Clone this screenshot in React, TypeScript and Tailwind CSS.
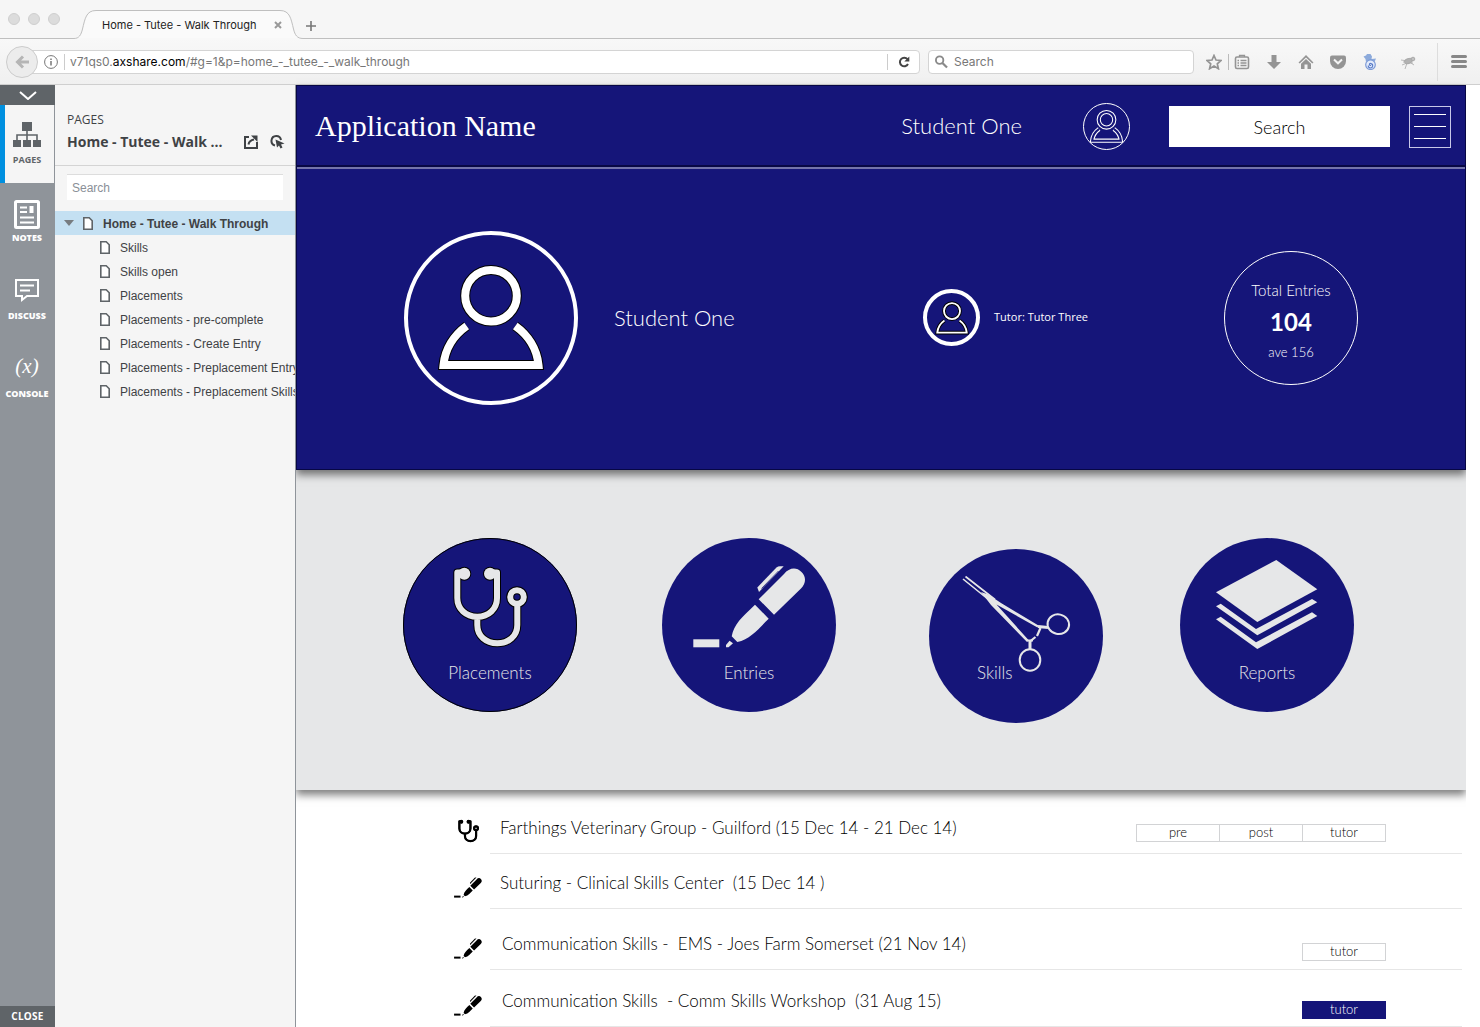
import { ReactNode } from "react";

const NAVY = "#151579";
const PALE = "#e6e7e8";

const PAGES = [
  "Skills",
  "Skills open",
  "Placements",
  "Placements - pre-complete",
  "Placements - Create Entry",
  "Placements - Preplacement Entry",
  "Placements - Preplacement Skills",
];

/* ---------- icons ---------- */

interface PersonProps {
  className: string;
  outer: number;
  inner: number;
  outerColor?: string;
  innerColor?: string;
}

function Person({ className, outer, inner, outerColor = "#000", innerColor = "#fff" }: PersonProps) {
  const body = "M62.7 95C50 104 41 118 39.5 134H134.5C133 118 124 104 111.3 95";
  return (
    <svg viewBox="29 29 116 116" fill="none" className={className} aria-hidden="true">
      <g stroke={outerColor} strokeWidth={outer}>
        <path d={body} />
        <circle cx="87" cy="64.7" r="25.8" />
      </g>
      <g stroke={innerColor} strokeWidth={inner}>
        <path d={body} />
        <circle cx="87" cy="64.7" r="25.8" />
      </g>
    </svg>
  );
}

function StethoscopeShape({ color, outline }: { color: string; outline?: string }) {
  const tubes = "M61 34.5H54.3V60C54.3 71 63 78.7 74.3 78.7S94 71 94 60V34.5H87M74.3 78.7V87C74.3 98 83 105.3 94.3 105.3S114.3 98 114.3 87V68";
  return (
    <>
      {outline && (
        <g stroke={outline} fill={outline}>
          <path d={tubes} fill="none" strokeWidth="8" strokeLinejoin="round" />
          <circle cx="61.3" cy="35.7" r="7" stroke="none" />
          <circle cx="87" cy="35.7" r="7" stroke="none" />
          <circle cx="114" cy="59" r="6.8" fill="none" strokeWidth="8" />
        </g>
      )}
      <g stroke={color} fill={color}>
        <path d={tubes} fill="none" strokeWidth="6" strokeLinejoin="round" />
        <circle cx="61.3" cy="35.7" r="6" stroke="none" />
        <circle cx="87" cy="35.7" r="6" stroke="none" />
        <circle cx="114" cy="59" r="6.8" fill="none" strokeWidth="6" />
      </g>
    </>
  );
}

function PenShape({ color }: { color: string }) {
  return (
    <g fill={color}>
      <path d="M31.3 101.3H57.3V109.3H31.3Z" />
      <path d="M64 107L67.5 102.7L71 105.2L66.5 109.3H64Z" />
      <path d="M93 66.7L106.7 80.7C97 90 89 101 75.3 104L69.7 98.3C72 86 80 79 93 66.7Z" />
      <path d="M96.7 61.3L122 36C127 30 134 28.5 139.5 34C144.5 39 144 45.5 139 50.5L112 76.7Z" />
      <path d="M114.5 29.5Q116 28.2 118 28.2H121.7L97 54L95.3 49.5Z" />
      <path d="M99.5 50.5L116.5 33" stroke={color === PALE ? NAVY : "#fff"} strokeWidth=".8" />
    </g>
  );
}

function ForcepsShape() {
  return (
    <g stroke={PALE} fill="none">
      <path d="M52 43L58 45L66 50L72 54L109.5 76.5L108.5 78.5L67.5 55.500L99.5 91L98 93L62 56Z" fill={PALE} stroke="none" />
      <path d="M34 30L60 51M36.5 27.5L66 50.5" strokeWidth="1.6" />
      <path d="M109 77.5L119 78.5" strokeWidth="3" />
      <path d="M111.5 79L108 87M106.5 88L101.5 92" strokeWidth="2.2" />
      <path d="M98 91.5H104" strokeWidth="2" />
      <path d="M101 91V100" strokeWidth="3" />
      <ellipse cx="129.3" cy="75.2" rx="10.8" ry="9.8" strokeWidth="2" transform="rotate(12 129.3 75.2)" />
      <ellipse cx="101" cy="111" rx="10.3" ry="10.8" strokeWidth="2" />
    </g>
  );
}

function PapersShape() {
  return (
    <g fill={PALE}>
      <path d="M96.3 22L137.3 51.3L77.3 84L36 54.3Z" />
      <path d="M36 68.3L40.7 65.7L76 91L132 61L137.3 64.3L77.3 97.3Z" />
      <path d="M36 81.3L40.7 78.7L76 104.3L132 74.3L137.3 78L77.3 111Z" />
    </g>
  );
}

function PageIcon() {
  return (
    <svg viewBox="0 0 10 13" className="h-[13px] w-[10px] shrink-0" aria-hidden="true">
      <path d="M.8 .8H6.2L9.2 3.8V12.2H.8Z" fill="#fff" stroke="#5f6468" strokeWidth="1.6" />
    </svg>
  );
}

/* ---------- browser chrome ---------- */

function TabStrip() {
  return (
    <div className="flex h-[39px] bg-[#f6f6f6]">
      <div className="flex w-[74px] items-center gap-2 border-b border-[#bfbfbf] pl-2">
        <span className="size-3 rounded-full border border-[#cfcfcf] bg-[#dcdcdc]" />
        <span className="size-3 rounded-full border border-[#cfcfcf] bg-[#dcdcdc]" />
        <span className="size-3 rounded-full border border-[#cfcfcf] bg-[#dcdcdc]" />
      </div>
      <div className="grid w-[229px]">
        <svg viewBox="0 0 229 39" className="col-start-1 row-start-1 h-[39px] w-full" aria-hidden="true">
          <path d="M0 38.5C5 38.5 7 35 8.5 29C11 19 12 10.5 22 10.5H206C216 10.5 217 19 219.5 29C221 35 223 38.5 229 38.5" fill="#fafafa" stroke="#bfbfbf" />
        </svg>
        <div className="col-start-1 row-start-1 flex items-center justify-between pt-[11px] pr-[21px] pl-7">
          <span className="text-[11px] text-[#222]">Home - Tutee - Walk Through</span>
          <button aria-label="Close tab">
            <svg viewBox="0 0 8 8" className="size-2" stroke="#999" strokeWidth="2">
              <path d="M1 1L7 7M7 1L1 7" />
            </svg>
          </button>
        </div>
      </div>
      <div className="flex flex-1 items-center border-b border-[#bfbfbf] pt-[13px] pl-[3px]">
        <button aria-label="New tab">
          <svg viewBox="0 0 10 10" className="size-[10px]" stroke="#777" strokeWidth="1.6">
            <path d="M5 0V10M0 5H10" />
          </svg>
        </button>
      </div>
    </div>
  );
}

function ToolButton({ label, children }: { label: string; children: ReactNode }) {
  return (
    <button aria-label={label} className="flex w-8 justify-center">
      <svg viewBox="0 0 16 16" className="size-4" fill="#949494">
        {children}
      </svg>
    </button>
  );
}

function Toolbar() {
  return (
    <div className="flex h-[46px] items-center border-b border-[#cfcfcf] bg-linear-to-b from-[#f8f8f8] to-[#f0f0f0] pl-[6px]">
      <button aria-label="Back" className="z-10 flex size-8 shrink-0 items-center justify-center rounded-full border border-[#ccc] bg-[#ececec]">
        <svg viewBox="0 0 14 14" className="size-[14px]" fill="none" stroke="#b5b5b5" strokeWidth="3">
          <path d="M14 7H3M8 1.5L2.5 7L8 12.5" />
        </svg>
      </button>
      <div className="-ml-2 flex h-6 flex-1 items-center rounded-r border border-[#d4d4d4] bg-white pl-[13px]">
        <svg viewBox="0 0 14 14" className="size-[14px] shrink-0" fill="none" stroke="#777" aria-hidden="true">
          <circle cx="7" cy="7" r="6.4" />
          <path d="M7 6V10.5M7 3.5V5" strokeWidth="1.5" />
        </svg>
        <a href="#home" className="ml-[6px] border-l border-[#ccc] pl-[5px] text-[12px] leading-4 text-[#777]">
          v71qs0.<span className="text-black">axshare.com</span>/#g=1&amp;p=home_-_tutee_-_walk_through
        </a>
        <button aria-label="Reload" className="ml-auto flex h-4 w-8 items-center justify-center border-l border-[#ccc]">
          <svg viewBox="0 0 12 12" className="size-3" fill="none" stroke="#444" strokeWidth="2">
            <path d="M9.5 3.2A4.3 4.3 0 1 0 10 8" />
            <path d="M11.3 .5V5.5H6.3Z" fill="#444" stroke="none" />
          </svg>
        </button>
      </div>
      <label className="ml-2 flex h-6 w-[266px] items-center gap-[6px] rounded border border-[#d4d4d4] bg-white pl-[6px]">
        <svg viewBox="0 0 14 14" className="size-[14px]" fill="none" stroke="#8a8a8a" strokeWidth="2">
          <circle cx="5" cy="5" r="4" />
          <path d="M8 8L13 13" strokeWidth="2.4" />
        </svg>
        <input aria-label="Web search" placeholder="Search" className="w-full text-[12px] outline-none placeholder:text-[#777]" />
      </label>
      <div className="ml-3 flex items-center">
        <button aria-label="Bookmark" className="flex w-[23px] justify-start border-r border-[#bbb]">
          <svg viewBox="0 0 16 16" className="size-4" fill="none" stroke="#949494" strokeWidth="1.7">
            <path d="M8 1.5L10 6L15 6.5L11.3 9.8L12.4 14.7L8 12L3.6 14.7L4.7 9.8L1 6.5L6 6Z" />
          </svg>
        </button>
        <button aria-label="Library" className="mr-2 ml-[5px]">
          <svg viewBox="0 0 16 16" className="size-4" fill="none" stroke="#949494" strokeWidth="1.6">
            <rect x="1.5" y="3" width="13" height="11.5" rx="1.5" />
            <path d="M5.5 3V1.5H10.5V3M3.5 6.5H5M6.5 6.5H12.5M3.5 9H5M6.5 9H12.5M3.5 11.5H5M6.5 11.5H12.5" strokeWidth="1.3" />
          </svg>
        </button>
        <ToolButton label="Downloads">
          <path d="M5.5 1H10.5V8H15L8 15L1 8H5.5Z" />
        </ToolButton>
        <ToolButton label="Home page">
          <path d="M8 1L15.5 8.5L14.3 9.5L8 3.5L1.7 9.5L.5 8.5ZM8 5L13 9.7V15H9.5V10.5H6.5V15H3V9.7Z" />
        </ToolButton>
        <ToolButton label="Pocket">
          <path d="M2 1.5H14Q16 1.5 16 3.5V7A8 8 0 0 1 0 7V3.5Q0 1.5 2 1.5Z" />
          <path d="M4 5.5L8 9.3L12 5.5" fill="none" stroke="#f4f4f4" strokeWidth="2" />
        </ToolButton>
        <ToolButton label="Add-on">
          <path d="M1.5 2.5L4 1.5L5 0H8.500L10 2.500L9.500 5L14 4.500L12.500 8H4L3.500 5Z" fill="#8caadb" />
          <circle cx="8.5" cy="10.7" r="4.8" fill="#e3ebfb" stroke="#7c9ad6" strokeWidth="1.2" />
          <path d="M9 11.2A1 1 0 1 1 9 9.6A2.2 2.2 0 1 1 6.300 11.500" fill="none" stroke="#5b7dc8" strokeWidth="1.100" />
        </ToolButton>
        <button aria-label="Inspector" className="ml-2 flex w-7 justify-center">
          <svg viewBox="0 0 16 16" className="size-4" fill="none" stroke="#aaa">
            <path d="M1 6L8 7L12 4M2 11L7 9L13 9M5 15L7 9M3 8H8M11 9L14 11" strokeWidth=".8" />
            <ellipse cx="8.5" cy="7" rx="4" ry="2.3" fill="#b2b2b2" transform="rotate(-20 8.5 7)" />
            <circle cx="13" cy="5" r="1.8" fill="#c0c0c0" />
          </svg>
        </button>
      </div>
      <button aria-label="Menu" className="ml-[15px] flex h-[38px] w-[43px] items-center justify-center border-l border-[#ddd]">
        <svg viewBox="0 0 16 13" className="h-[13px] w-4" stroke="#888" strokeWidth="3" strokeLinecap="round">
          <path d="M1.5 1.5H14.5M1.5 6.5H14.5M1.5 11.5H14.5" />
        </svg>
      </button>
    </div>
  );
}

/* ---------- prototype sidebar ---------- */

function RailButton({ label, active = false, children }: { label: string; active?: boolean; children: ReactNode }) {
  const tone = active
    ? "border-[#0090e0] bg-[#f5f5f5] text-[#5f6468] font-bold"
    : "border-transparent text-white font-extrabold";
  return (
    <button className={`flex h-[78px] w-[54px] flex-col items-center border-l-5 pt-[14px] pr-[5px] text-[9px] leading-3 ${tone}`}>
      <span className="flex h-[35px] items-start justify-center">{children}</span>
      {label}
    </button>
  );
}

function Rail() {
  return (
    <nav className="flex w-[55px] shrink-0 flex-col bg-[#8f949a] font-['Open_Sans',sans-serif]">
      <button aria-label="Collapse" className="flex h-5 items-center justify-center bg-[#5f6468]">
        <svg viewBox="0 0 18 9" className="h-[9px] w-[18px]" fill="none" stroke="#fff" strokeWidth="2">
          <path d="M1 1L9 8L17 1" />
        </svg>
      </button>
      <RailButton label="PAGES" active>
        <svg viewBox="0 0 28 28" className="h-7 w-7 shrink-0" fill="#5f6468">
          <path d="M9 3H19V12H9ZM0 21H8V28H0ZM10 21H18V28H10ZM20 21H28V28H20Z" />
          <path d="M14 12V21M4 21V16H24V21" fill="none" stroke="#5f6468" strokeWidth="1.6" />
        </svg>
      </RailButton>
      <RailButton label="NOTES">
        <svg viewBox="0 0 26 32" className="h-8 w-[26px] shrink-0" fill="none" stroke="#fff" strokeWidth="2">
          <rect x="1.5" y="4.500" width="23" height="26" strokeWidth="3" rx="1" />
          <path d="M6 10.5H13M6 15H13M6 20.5H20M6 25.5H20" />
          <path d="M17.500 9V16" strokeWidth="4" />
        </svg>
      </RailButton>
      <RailButton label="DISCUSS">
        <svg viewBox="0 0 26 28" className="h-7 w-[26px] shrink-0" fill="none" stroke="#fff" strokeWidth="2">
          <path d="M2 5H24V21H13L8 25V21H2Z" />
          <path d="M6 10.500H20M6 15.500H16" />
        </svg>
      </RailButton>
      <RailButton label="CONSOLE">
        <span className="font-['Liberation_Serif',serif] text-[21px] leading-[26px] font-normal italic">(x)</span>
      </RailButton>
      <button className="mt-auto h-[21px] bg-[#5f6468] text-[10px] font-bold tracking-wide text-white">CLOSE</button>
    </nav>
  );
}

function PagesPanel() {
  return (
    <aside className="w-[241px] shrink-0 overflow-hidden border-r border-[#8f949a] bg-[#f5f5f5] font-['Liberation_Sans',Arial,sans-serif] text-[#3f4245]">
      <div className="h-[81px] border-b border-[#d4d4d4] px-3 pt-[26px] font-['Open_Sans',sans-serif]">
        <p className="text-[12px] leading-[18px]">PAGES</p>
        <div className="flex items-center">
          <h2 className="flex-1 text-[14px] leading-[26px] font-bold whitespace-nowrap">Home - Tutee - Walk ...</h2>
          <button aria-label="Open in new window" className="mr-3">
            <svg viewBox="0 0 14 14" className="size-[14px]" fill="none" stroke="#3f4245" strokeWidth="2">
              <path d="M5 2H1V13H13V7" />
              <path d="M4.5 9.5C5 6.5 7 5 10 4.5" />
              <path d="M7 .5H13.5V7Z" fill="#3f4245" stroke="none" />
            </svg>
          </button>
          <button aria-label="Highlight links" className="-mr-[2px]">
            <svg viewBox="0 0 15 14" className="h-[14px] w-[15px]" fill="none" stroke="#3f4245" strokeWidth="2">
              <path d="M5 10.5A4.8 4.8 0 1 1 11 5" />
              <path d="M5.5 4.5L14.5 8.5L11 9.5L12.5 12.5L10.5 13.5L9 10.5L7 12.5Z" fill="#3f4245" stroke="none" />
            </svg>
          </button>
        </div>
      </div>
      <input
        aria-label="Search pages"
        placeholder="Search"
        className="mx-3 mt-2 block h-[26px] w-[216px] border-t border-[#ddd] bg-white px-[5px] text-[12px] outline-none placeholder:text-[#8a9097]"
      />
      <ul className="mt-[11px] text-[12px] leading-[22px] whitespace-nowrap">
        <li className="flex h-6 items-center bg-[#c4e0f2] pl-[9px] font-bold">
          <svg viewBox="0 0 10 6" className="mr-[9px] h-[6px] w-[10px]" fill="#777c80" aria-hidden="true">
            <path d="M0 0H10L5 6Z" />
          </svg>
          <PageIcon />
          <a href="#home" className="ml-[10px] pt-[2px]">Home - Tutee - Walk Through</a>
        </li>
        {PAGES.map((page) => (
          <li key={page} className="flex h-6 items-center pl-[45px]">
            <PageIcon />
            <a href="#page" className="ml-[10px] pt-[2px]">{page}</a>
          </li>
        ))}
      </ul>
    </aside>
  );
}

/* ---------- application ---------- */

function AppHeader() {
  return (
    <header className="flex h-[81px] items-center border-b-2 border-[#070745] pt-[2px] pr-[14px] pl-[18px]">
      <h1 className="pb-[2px] font-['Liberation_Serif',serif] text-[30px]">Application Name</h1>
      <span className="ml-auto pb-[2px] text-[22px]">Student One</span>
      <button aria-label="Profile" className="ml-[61px] flex size-[47px] items-center justify-center rounded-full border border-white">
        <Person className="size-[35px]" outer={14} inner={7} outerColor="#fff" innerColor={NAVY} />
      </button>
      <input aria-label="Search" placeholder="Search" className="ml-[39px] h-[41px] w-[221px] bg-white text-center text-[18px] outline-none placeholder:text-black" />
      <button aria-label="Menu" className="ml-[19px] flex h-[42px] w-[42px] flex-col justify-center gap-[11px] border border-[#c8c8e8] px-1">
        <span className="h-px w-full bg-white" />
        <span className="h-px w-full bg-white" />
        <span className="h-px w-full bg-white" />
      </button>
    </header>
  );
}

function ProfileBanner() {
  return (
    <section className="flex h-[302px] items-center border-t-2 border-[#7373ab] px-[107px] pb-[3px] text-white">
      <div className="flex size-[174px] shrink-0 items-center justify-center rounded-full border-4 border-white">
        <Person className="size-[116px]" outer={10} inner={8} />
      </div>
      <p className="ml-9 text-[22px]">Student One</p>
      <div className="ml-auto flex size-[57px] items-center justify-center rounded-full border-4 border-white">
        <Person className="size-[36px]" outer={12} inner={6} />
      </div>
      <p className="ml-[14px] font-['Open_Sans',sans-serif] text-[11px] font-normal">Tutor: Tutor Three</p>
      <div className="ml-[136px] flex size-[134px] flex-col items-center justify-center rounded-full border border-white pt-1">
        <p className="text-[15px] leading-6">Total Entries</p>
        <p className="text-[24px] leading-10 font-bold">104</p>
        <p className="text-[13px] leading-5">ave 156</p>
      </div>
    </section>
  );
}

interface TileProps {
  label: string;
  className?: string;
  labelClass?: string;
  children: ReactNode;
}

function Tile({ label, className = "", labelClass = "justify-center pt-[123px]", children }: TileProps) {
  return (
    <button className={`grid size-[174px] shrink-0 rounded-full bg-[#151579] text-[17px] leading-6 text-[#e6e7e8] ${className}`}>
      <svg viewBox="0 0 174 174" className="col-start-1 row-start-1 size-[174px]" aria-hidden="true">
        {children}
      </svg>
      <span className={`col-start-1 row-start-1 flex ${labelClass}`}>{label}</span>
    </button>
  );
}

function Tiles() {
  return (
    <section className="z-10 flex h-[320px] items-start justify-between bg-[#e6e7e8] pt-[68px] pr-[112px] pl-[107px] shadow-[0_5px_8px_rgba(0,0,0,0.5)]">
      <Tile label="Placements">
        <circle cx="87" cy="87" r="86.5" fill="none" stroke="#000" />
        <StethoscopeShape color={PALE} outline="#000" />
      </Tile>
      <Tile label="Entries">
        <PenShape color={PALE} />
      </Tile>
      <Tile label="Skills" className="mt-[11px] -mr-2 ml-2" labelClass="pl-[48px] pt-[112px]">
        <ForcepsShape />
      </Tile>
      <Tile label="Reports">
        <PapersShape />
      </Tile>
    </section>
  );
}

interface Entry {
  kind: "placement" | "note";
  title: string;
  tags: string[];
  done?: boolean;
  height: string;
  titlePad: string;
  tagPad: string;
}

const ENTRIES: Entry[] = [
  { kind: "placement", title: "Farthings Veterinary Group - Guilford (15 Dec 14 - 21 Dec 14)", tags: ["pre", "post", "tutor"], height: "h-16", titlePad: "pl-[10px]", tagPad: "mb-[11px]" },
  { kind: "note", title: "Suturing - Clinical Skills Center  (15 Dec 14 )", tags: [], height: "h-[55px]", titlePad: "pl-[10px]", tagPad: "" },
  { kind: "note", title: "Communication Skills -  EMS - Joes Farm Somerset (21 Nov 14)", tags: ["tutor"], height: "h-[61px]", titlePad: "pl-3", tagPad: "mb-2" },
  { kind: "note", title: "Communication Skills  - Comm Skills Workshop  (31 Aug 15)", tags: ["tutor"], done: true, height: "h-[57px]", titlePad: "pl-3", tagPad: "mb-[7px]" },
];

function EntryRow({ entry }: { entry: Entry }) {
  const tagTone = entry.done ? "bg-[#151579] text-white border-[#151579]" : "bg-white border-[#d2d3d5]";
  return (
    <li className={`flex items-end pr-1 pl-[158px] ${entry.height}`}>
      {entry.kind === "placement" ? (
        <svg viewBox="46 26 82 86" className="mr-[10px] mb-[11px] ml-[3px] h-6 w-[23px] shrink-0" aria-hidden="true">
          <StethoscopeShape color="#000" outline="#000" />
        </svg>
      ) : (
        <svg viewBox="31 27 113 83" className="mr-2 mb-[11px] h-[21px] w-7 shrink-0" aria-hidden="true">
          <PenShape color="#000" />
        </svg>
      )}
      <div className={`flex h-full flex-1 items-end border-b border-[#e6e6e6] pr-[76px] ${entry.titlePad}`}>
        <p className="mb-[13px] text-[17px] leading-6 whitespace-pre">{entry.title}</p>
        <div className={`ml-auto flex ${entry.tagPad}`}>
          {entry.tags.map((tag) => (
            <button key={tag} className={`-ml-px h-[18px] w-[84px] border pb-[2px] text-[13px] leading-3 ${tagTone}`}>
              {tag}
            </button>
          ))}
        </div>
      </div>
    </li>
  );
}

export default function App() {
  return (
    <div className="flex min-h-screen flex-col bg-white font-['Inter',sans-serif]">
      <TabStrip />
      <Toolbar />
      <div className="flex flex-1">
        <Rail />
        <PagesPanel />
        <main className="mr-[14px] flex min-w-0 flex-1 flex-col overflow-x-clip font-['Lato',sans-serif] font-light">
          <div className="z-20 border border-[#070745] bg-[#151579] text-white shadow-[0_5px_8px_rgba(0,0,0,0.5)]">
            <AppHeader />
            <ProfileBanner />
          </div>
          <Tiles />
          <ul>
            {ENTRIES.map((entry) => (
              <EntryRow key={entry.title} entry={entry} />
            ))}
          </ul>
        </main>
      </div>
    </div>
  );
}
